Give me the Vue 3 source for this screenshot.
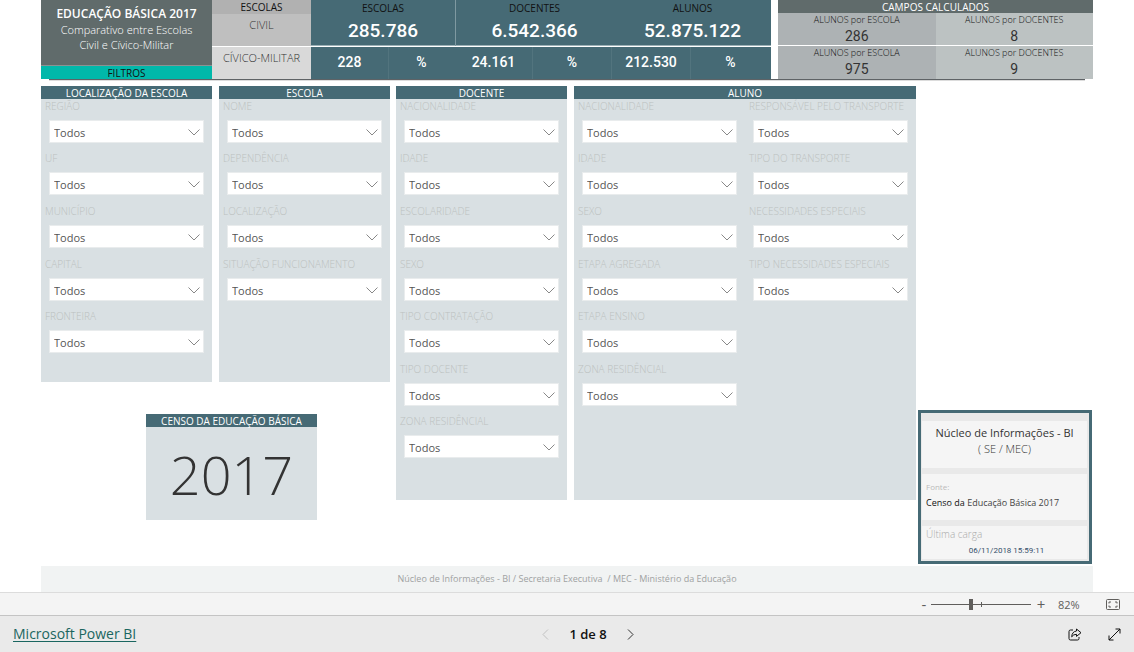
<script setup>
import { ref } from 'vue'

const zoom = ref(82)

const totals = [
  { label: 'ESCOLAS', value: '285.786' },
  { label: 'DOCENTES', value: '6.542.366' },
  { label: 'ALUNOS', value: '52.875.122' },
]
const military = ['228', '%', '24.161', '%', '212.530', '%']
const ratios = [
  { label: 'ALUNOS por ESCOLA', value: '286' },
  { label: 'ALUNOS por DOCENTES', value: '8' },
  { label: 'ALUNOS por ESCOLA', value: '975' },
  { label: 'ALUNOS por DOCENTES', value: '9' },
]
const panels = [
  { id: 'local', title: 'LOCALIZAÇÃO DA ESCOLA', columns: [['REGIÃO', 'UF', 'MUNICÍPIO', 'CAPITAL', 'FRONTEIRA']] },
  { id: 'escola', title: 'ESCOLA', columns: [['NOME', 'DEPENDÊNCIA', 'LOCALIZAÇÃO', 'SITUAÇÃO FUNCIONAMENTO']] },
  {
    id: 'docente',
    title: 'DOCENTE',
    columns: [['NACIONALIDADE', 'IDADE', 'ESCOLARIDADE', 'SEXO', 'TIPO CONTRATAÇÃO', 'TIPO DOCENTE', 'ZONA RESIDÊNCIAL']],
  },
  {
    id: 'aluno',
    title: 'ALUNO',
    columns: [
      ['NACIONALIDADE', 'IDADE', 'SEXO', 'ETAPA AGREGADA', 'ETAPA ENSINO', 'ZONA RESIDÊNCIAL'],
      ['RESPONSÁVEL PELO TRANSPORTE', 'TIPO DO TRANSPORTE', 'NECESSIDADES ESPECIAIS', 'TIPO NECESSIDADES ESPECIAIS'],
    ],
  },
]
</script>

<template>
  <div class="app">
    <main class="report">
      <header class="summary">
        <div class="title-block">
          <div class="title-text">
            <h1>EDUCAÇÃO BÁSICA 2017</h1>
            <p>Comparativo entre Escolas<br />Civil e Cívico-Militar</p>
          </div>
          <div class="filters-tag">FILTROS</div>
        </div>

        <div class="kinds">
          <div class="kinds-head">ESCOLAS</div>
          <div class="kind civil">CIVIL</div>
          <div class="kind military">CÍVICO-MILITAR</div>
        </div>

        <div class="totals">
          <div class="totals-row">
            <div v-for="t in totals" :key="t.label" class="total">
              <span class="total-label">{{ t.label }}</span>
              <span class="total-value">{{ t.value }}</span>
            </div>
          </div>
          <div class="military-row">
            <div v-for="(m, i) in military" :key="i" class="military-cell">{{ m }}</div>
          </div>
        </div>

        <div class="calculated">
          <div class="calculated-head">CAMPOS CALCULADOS</div>
          <div class="ratios">
            <div v-for="(r, i) in ratios" :key="i" class="ratio">
              <span class="ratio-label">{{ r.label }}</span>
              <span class="ratio-value">{{ r.value }}</span>
            </div>
          </div>
        </div>
      </header>
      <div class="rule"></div>

      <div class="body">
        <section v-for="p in panels" :key="p.id" class="panel" :class="p.id">
          <h2>{{ p.title }}</h2>
          <div class="panel-body">
            <div v-for="(col, c) in p.columns" :key="c" class="filter-col">
              <div v-for="(f, i) in col" :key="f" class="filter">
                <label :for="`${p.id}-${c}-${i}`">{{ f }}</label>
                <div class="select-box">
                  <select :id="`${p.id}-${c}-${i}`"><option>Todos</option></select>
                  <svg class="chevron" viewBox="0 0 12 7" aria-hidden="true"><path d="M.5.5 6 6 11.5.5" /></svg>
                </div>
              </div>
            </div>
          </div>
        </section>

        <section class="census">
          <h2>CENSO DA EDUCAÇÃO BÁSICA</h2>
          <div class="census-year">2017</div>
        </section>

        <aside class="info">
          <div class="info-box info-org">Núcleo de Informações - BI<br /><span>( SE / MEC)</span></div>
          <div class="info-box info-source">
            <small>Fonte:</small>
            <p>Censo da <span>Educação Básica 2017</span></p>
          </div>
          <div class="info-box info-load">
            <p>Última carga</p>
            <time>06/11/2018 15:59:11</time>
          </div>
        </aside>
      </div>

      <footer class="credit">Núcleo de Informações - BI / Secretaria Executiva&nbsp; / MEC - Ministério da Educação</footer>
    </main>

    <div class="zoom-bar">
      <button class="zoom-out" aria-label="Reduzir">-</button>
      <div class="slider">
        <input v-model="zoom" type="range" min="10" max="190" aria-label="Zoom" />
        <i class="tick"></i>
      </div>
      <button class="zoom-in" aria-label="Ampliar">+</button>
      <span class="zoom-value">82%</span>
      <button class="fit" aria-label="Ajustar à página">
        <svg width="14" height="11" viewBox="0 0 14 11">
          <rect x=".5" y=".5" width="13" height="10" rx="1" />
          <path d="M5 3H3v1.5M9 3h2v1.5M5 8H3V6.500M9 8h2V6.500" />
        </svg>
      </button>
    </div>

    <nav class="bottom-bar">
      <a href="#">Microsoft Power BI</a>
      <div class="pager">
        <button disabled aria-label="Anterior">
          <svg width="7" height="11" viewBox="0 0 7 11"><path d="M6 .5 1 5.500 6 10.500" /></svg>
        </button>
        <span>1 de 8</span>
        <button aria-label="Próxima">
          <svg width="7" height="11" viewBox="0 0 7 11"><path d="M1 .5 6 5.500 1 10.500" /></svg>
        </button>
      </div>
      <div class="actions">
        <button aria-label="Compartilhar">
          <svg width="14" height="13" viewBox="0 0 14 13">
            <path d="M5 2H2.500Q1 2 1 3.500V10.500Q1 12 2.500 12H9.500Q11 12 11 10.500V9" />
            <path d="M8.500 1 13 4.700 8.500 8.400V6.300Q5.300 6.300 3.700 8.800 4 3.600 8.500 3Z" />
          </svg>
        </button>
        <button aria-label="Tela cheia">
          <svg width="13" height="13" viewBox="0 0 13 13"><path d="M1 12 12 1M7.500 1H12V5.500M1 7.500V12H5.500" /></svg>
        </button>
      </div>
    </nav>
  </div>
</template>

<style>
body {
  margin: 0;
  background: #fff;
}
</style>

<style scoped>
.app {
  display: flex;
  flex-direction: column;
  min-height: 100vh;
  font-family: "Open Sans", "Noto Sans", sans-serif;
  font-size: 10px;
  color: #333;
}
.app * {
  box-sizing: border-box;
}
h1,
h2,
p {
  margin: 0;
  font-weight: 400;
}
button {
  display: flex;
  align-items: center;
  justify-content: center;
  padding: 0;
  border: 0;
  background: none;
  font: inherit;
  color: inherit;
}
svg {
  display: block;
  fill: none;
  stroke: currentColor;
}
.report {
  display: flex;
  flex: 1;
  flex-direction: column;
  padding: 0 41px;
}

/* Summary strip */
.summary {
  display: grid;
  grid-template-columns: 171fr 99fr 460fr 322fr;
  height: 79px;
  text-align: center;
}
.title-block {
  display: flex;
  flex-direction: column;
  background: #606b6b;
  color: #fff;
}
.title-text {
  flex: 1;
  padding-top: 6px;
}
h1 {
  font-size: 12px;
  font-weight: 600;
  line-height: 16px;
}
.title-text p {
  font-size: 11px;
  font-weight: 300;
  line-height: 15px;
}
.filters-tag {
  height: 14px;
  border-top: 1px solid #8a9292;
  background: #01b8aa;
  color: #111;
  line-height: 15px;
}
.kinds {
  display: flex;
  flex-direction: column;
}
.kinds-head {
  height: 14px;
  background: #b1b1b1;
  color: #111;
  line-height: 14px;
}
.kind {
  font-size: 11px;
  font-weight: 300;
  line-height: 22px;
}
.civil {
  height: 32px;
  background: #bfbfbf;
}
.military {
  height: 33px;
  border-top: 1px solid #fff;
  background: #d9d9d9;
}
.totals {
  display: flex;
  flex-direction: column;
  color: #fff;
}
.totals-row,
.military-row {
  display: grid;
  background: #466a75;
}
.totals-row {
  grid-template-columns: 144fr 158fr 158fr;
  height: 46px;
  border-bottom: 1px solid #9bb0b6;
}
.total {
  display: flex;
  flex-direction: column;
}
.total + .total {
  border-left: 1px solid #7f99a1;
}
.total:last-child {
  border-left-color: transparent;
}
.total-label {
  color: #111;
  font-size: 10px;
  line-height: 16px;
}
.total-value {
  font-family: Roboto, sans-serif;
  font-size: 19px;
  font-weight: 500;
  line-height: 30px;
}
.military-row {
  grid-template-columns: 78fr 66fr 78fr 79fr 79fr 80fr;
  height: 33px;
  border-top: 1px solid #fff;
}
.military-cell {
  border-right: 1px solid #52747e;
  font-family: Roboto, sans-serif;
  font-size: 14px;
  font-weight: 500;
  line-height: 31px;
}
.military-cell:nth-child(2),
.military-cell:last-child {
  border-right-color: transparent;
}
.calculated {
  margin-left: 7px;
}
.calculated-head {
  height: 13px;
  background: #606b6b;
  color: #fff;
  line-height: 15px;
}
.ratios {
  display: grid;
  grid-template-columns: 1fr 1fr;
}
.ratio {
  display: flex;
  flex-direction: column;
  height: 33px;
  border-bottom: 1px solid #fff;
  background: #bcc2c2;
}
.ratio:nth-child(odd) {
  background: #adb2b4;
}
.ratio:nth-child(n + 3) {
  border-bottom: 0;
}
.ratio-label {
  color: #111;
  font-size: 9px;
  font-weight: 300;
  line-height: 13px;
}
.ratio-value {
  font-family: Roboto, sans-serif;
  font-size: 14px;
  line-height: 21px;
}
.rule {
  height: 2px;
  margin: 0 8px;
  border-top: 1px solid #5f6366;
  background: #dcdcdc;
}

/* Filter panels */
.body {
  display: grid;
  grid-template-columns: 178fr 177fr 178fr 344fr 175fr;
  grid-template-rows: 296px auto;
  margin-top: 5px;
}
h2 {
  height: 13px;
  background: #466a75;
  color: #fff;
  font-size: 10px;
  line-height: 15px;
  text-align: center;
}
.panel {
  grid-row: 1;
  margin-right: 7px;
  background: #d9e0e3;
}
.escola {
  margin-right: 6px;
}
.docente,
.aluno {
  grid-row: 1 / 3;
  height: 414px;
}
.aluno {
  margin-right: 2px;
}
.panel-body {
  display: flex;
}
.filter-col {
  display: grid;
  flex: 1 1 0;
  min-width: 0;
  grid-template-rows: 52px 53px 53px 52px 53px 52px 53px;
}
label {
  display: block;
  height: 21px;
  padding-left: 4px;
  color: #bcc0c0;
  font-weight: 300;
  line-height: 15px;
  white-space: nowrap;
}
.select-box {
  position: relative;
  height: 23px;
  margin: 0 8px;
}
select {
  width: 100%;
  height: 100%;
  padding: 2px 4px 0;
  border: 1px solid #e9eced;
  border-radius: 0;
  appearance: none;
  background: #fff;
  color: #555;
  font: 11px "Open Sans", "Noto Sans", sans-serif;
}
.chevron {
  position: absolute;
  top: 9px;
  right: 4px;
  width: 12px;
  height: 7px;
  color: #888;
  pointer-events: none;
}
.census {
  grid-column: 1 / 3;
  grid-row: 2;
  align-self: start;
  width: 171px;
  height: 106px;
  margin: 32px 0 0 105px;
  background: #d9e0e3;
}
.census-year {
  font-size: 54px;
  font-weight: 300;
  line-height: 95px;
  text-align: center;
}

/* Source card */
.info {
  display: flex;
  flex-direction: column;
  grid-column: 5;
  grid-row: 1 / 3;
  gap: 6px;
  margin: 324px 1px 0 0;
  padding: 8px 2px 2px 1px;
  border: 3px solid #466a75;
  background: #e9e9e9;
}
.info-box {
  padding-left: 4px;
  background: #f5f5f5;
}
.info-org {
  height: 47px;
  padding: 4px 0 0;
  font-size: 11px;
  line-height: 16px;
  text-align: center;
}
.info-org span,
.info-load p {
  font-weight: 300;
}
.info-source {
  height: 46px;
  padding-top: 7px;
}
.info-source small {
  display: block;
  color: #bbb;
  font-size: 8px;
  line-height: 12px;
}
.info-source p {
  color: #111;
  font-size: 9px;
  line-height: 19px;
}
.info-source span {
  color: #444;
}
.info-load {
  height: 33px;
  color: #aaa;
}
.info-load p {
  line-height: 17px;
}
.info-load time {
  display: block;
  color: #35506b;
  font-family: Roboto, sans-serif;
  font-size: 8px;
  line-height: 15px;
  text-align: center;
}
.credit {
  flex: 1;
  margin-top: 2px;
  background: #f1f3f3;
  color: #a0a2a2;
  font-size: 9px;
  line-height: 25px;
  text-align: center;
}

/* Viewer chrome */
.zoom-bar {
  display: flex;
  align-items: center;
  justify-content: flex-end;
  height: 24px;
  padding-right: 14px;
  border-top: 1px solid #dcdcdc;
  border-bottom: 1px solid #c4c4c4;
  background: #f4f4f4;
  color: #605e5c;
}
.zoom-out,
.zoom-in {
  width: 14px;
  font-size: 15px;
  line-height: 20px;
}
.zoom-in {
  width: 20px;
}
.slider {
  position: relative;
  width: 100px;
  height: 14px;
}
.slider input {
  display: block;
  width: 100%;
  height: 14px;
  margin: 0;
  appearance: none;
  background: linear-gradient(#605e5c, #605e5c) center / 100% 1px no-repeat;
}
.slider input::-webkit-slider-thumb {
  width: 4px;
  height: 11px;
  appearance: none;
  background: #605e5c;
}
.tick {
  position: absolute;
  top: 5px;
  left: 50%;
  width: 1px;
  height: 5px;
  background: #605e5c;
}
.zoom-value {
  width: 42px;
  padding-left: 7px;
  font-size: 11px;
}
.fit {
  margin-left: 13px;
}
.bottom-bar {
  display: grid;
  grid-template-columns: 1fr auto 1fr;
  align-items: center;
  height: 36px;
  padding: 0 13px;
  background: #eaeaea;
}
.bottom-bar > a {
  color: #1a6660;
  font-size: 14px;
  line-height: 18px;
  text-underline-offset: 2px;
}
.pager {
  display: flex;
  align-items: center;
  gap: 20px;
  margin-left: 42px;
  color: #333;
}
.pager button:disabled {
  color: #c0c0c0;
}
.pager span {
  color: #111;
  font-size: 13px;
  font-weight: 600;
}
.actions {
  display: flex;
  align-items: center;
  justify-content: flex-end;
  gap: 26px;
  color: #111;
}
</style>
